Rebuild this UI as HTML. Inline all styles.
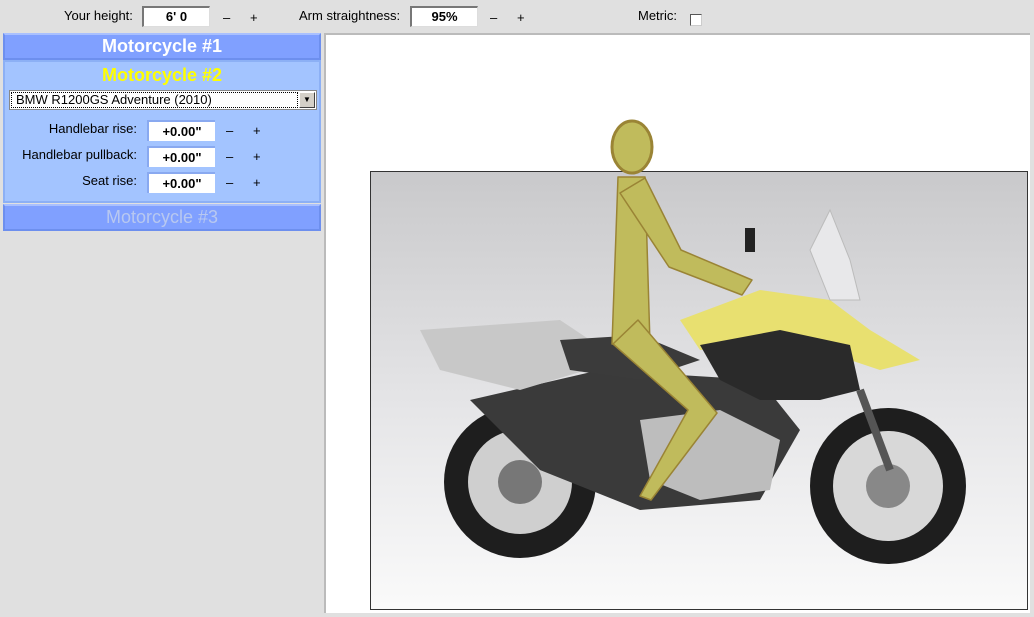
<!DOCTYPE html>
<html><head><meta charset="utf-8"><style>
*{box-sizing:border-box;margin:0;padding:0}
body{width:1034px;height:617px;background:#e0e0e0;font-family:"Liberation Sans",Arial,sans-serif;font-size:13px;color:#000;position:relative;overflow:hidden}
.a{position:absolute}
.inp{position:absolute;background:#fff;text-align:center;font-weight:bold;font-size:13px;line-height:18px}
.top .inp{border-top:2px solid #777;border-left:2px solid #777;border-right:1px solid #ddd;border-bottom:1px solid #ddd;height:21px}
.pm{position:absolute;font-size:13px}
.hdr{position:absolute;left:3px;width:318px;text-align:center;font-weight:bold;font-size:18px;color:#fff;background:#80a0ff;border:2px solid #6d8fee;border-top-color:#a9c0ff;height:27px;line-height:23px}
.panel{position:absolute;left:3px;top:60px;width:318px;height:143px;background:#a3c4ff;border:2px solid #8cb0f5}
.lbl{position:absolute;text-align:right;width:132px;left:0}
.pin{position:absolute;left:142px;width:68px;height:21px;background:#fff;border-top:2px solid #89a9f0;border-left:2px solid #89a9f0;text-align:center;font-weight:bold;line-height:19px}
</style></head><body>
<div class="top">
<div class="a" style="left:64px;top:8px">Your height:</div>
<div class="inp" style="left:142px;top:6px;width:68px">6' 0</div>
<div class="pm" style="left:223px;top:10px">–</div><div class="pm" style="left:250px;top:10px">+</div>
<div class="a" style="left:299px;top:8px">Arm straightness:</div>
<div class="inp" style="left:410px;top:6px;width:68px">95%</div>
<div class="pm" style="left:490px;top:10px">–</div><div class="pm" style="left:517px;top:10px">+</div>
<div class="a" style="left:638px;top:8px">Metric:</div>
<div class="a" style="left:690px;top:14px;width:12px;height:12px;background:#fff;border-top:1px solid #555;border-left:1px solid #555;border-right:1px solid #ccc;border-bottom:1px solid #ccc"></div>
</div>
<div class="hdr" style="top:33px">Motorcycle #1</div>
<div class="panel">
<div class="a" style="left:0;width:314px;text-align:center;top:3px;font-weight:bold;font-size:18px;color:#ffff00">Motorcycle #2</div>
<div class="a" style="left:4px;top:28px;width:308px;height:20px;background:#fff;border:1px solid #888">
<div class="a" style="left:1px;top:1px;width:287px;height:16px;border:1px dotted #000;padding-left:4px;line-height:14px">BMW R1200GS Adventure (2010)</div>
<div class="a" style="right:1px;top:1px;width:16px;height:16px;background:#d4d0c8;border:1px solid;border-color:#fff #404040 #404040 #fff;font-size:8px;text-align:center;line-height:14px">▼</div>
</div>
<div class="lbl" style="top:59px">Handlebar rise:</div><div class="pin" style="top:58px">+0.00"</div>
<div class="pm" style="left:221px;top:61px">–</div><div class="pm" style="left:248px;top:61px">+</div>
<div class="lbl" style="top:85px">Handlebar pullback:</div><div class="pin" style="top:84px">+0.00"</div>
<div class="pm" style="left:221px;top:87px">–</div><div class="pm" style="left:248px;top:87px">+</div>
<div class="lbl" style="top:111px">Seat rise:</div><div class="pin" style="top:110px">+0.00"</div>
<div class="pm" style="left:221px;top:113px">–</div><div class="pm" style="left:248px;top:113px">+</div>
</div>
<div class="hdr" style="top:204px;color:#b8c8f0;font-weight:normal">Motorcycle #3</div>

<div class="a" style="left:324px;top:33px;width:706px;height:580px;background:#fff;border-left:2px solid #bbb;border-top:2px solid #bbb"></div>
<svg class="a" style="left:0;top:0" width="1034" height="617">
<defs><linearGradient id="g" x1="0" y1="0" x2="0" y2="1"><stop offset="0" stop-color="#c9c9cb"/><stop offset="0.55" stop-color="#e6e6e8"/><stop offset="1" stop-color="#fafafa"/></linearGradient></defs>
<rect x="370.5" y="171.5" width="657" height="438" fill="url(#g)" stroke="#333"/>
<circle cx="520" cy="482" r="76" fill="#1e1e1e"/><circle cx="520" cy="482" r="52" fill="#cfcfcf"/><circle cx="520" cy="482" r="22" fill="#777"/>
<circle cx="888" cy="486" r="78" fill="#1e1e1e"/><circle cx="888" cy="486" r="55" fill="#d8d8d8"/><circle cx="888" cy="486" r="22" fill="#888"/>
<polygon points="470,400 600,370 760,380 800,430 760,500 640,510 540,470" fill="#3a3a3a"/>
<polygon points="640,420 720,410 780,440 770,490 700,500 650,480" fill="#bdbdbd"/>
<polygon points="420,330 560,320 620,360 520,390 440,370" fill="#c8c8c8"/>
<polygon points="560,340 640,335 700,360 640,380 570,370" fill="#3b3b3b"/>
<polygon points="680,320 760,290 830,300 870,330 920,360 880,370 820,350 760,345 700,350" fill="#e8e070"/>
<polygon points="700,345 780,330 850,345 860,390 820,400 760,400 720,380" fill="#2a2a2a"/>
<polygon points="830,210 850,260 860,300 830,300 810,250" fill="#e8e8ea" stroke="#bbb"/>
<line x1="860" y1="390" x2="890" y2="470" stroke="#555" stroke-width="8"/>
<rect x="745" y="228" width="10" height="24" fill="#222"/>
<g fill="#c0bb5c" stroke="#9a8435" stroke-width="1.5" stroke-linejoin="round">
<polygon points="618,177 645,177 650,344 612,344"/>
<polygon points="620,193 645,178 681,250 752,280 742,295 669,267"/>
<polygon points="613,344 638,320 717,413 651,500 640,496 688,410"/>
</g>
<ellipse cx="632" cy="147" rx="20" ry="26" fill="#c0bb5c" stroke="#9a8435" stroke-width="3"/>
</svg>
</body></html>
